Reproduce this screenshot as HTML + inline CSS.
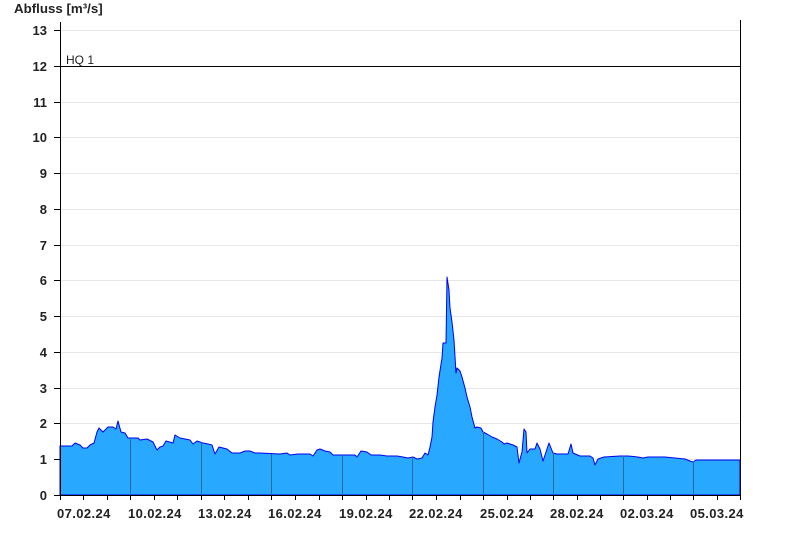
<!DOCTYPE html>
<html><head><meta charset="utf-8"><style>
body{margin:0;background:#fff;width:800px;height:550px;overflow:hidden}
svg{display:block;font-family:"Liberation Sans",Arial,sans-serif}
</style></head><body>
<svg width="800" height="550" viewBox="0 0 800 550">
<text x="14" y="13" font-size="13.3" font-weight="bold" fill="#222">Abfluss [m³/s]</text>
<g stroke="#e6e6e6" stroke-width="1">
<line x1="60" x2="740" y1="30.5" y2="30.5"/>
<line x1="60" x2="740" y1="102.5" y2="102.5"/>
<line x1="60" x2="740" y1="137.5" y2="137.5"/>
<line x1="60" x2="740" y1="173.5" y2="173.5"/>
<line x1="60" x2="740" y1="209.5" y2="209.5"/>
<line x1="60" x2="740" y1="245.5" y2="245.5"/>
<line x1="60" x2="740" y1="280.5" y2="280.5"/>
<line x1="60" x2="740" y1="316.5" y2="316.5"/>
<line x1="60" x2="740" y1="352.5" y2="352.5"/>
<line x1="60" x2="740" y1="388.5" y2="388.5"/>
<line x1="60" x2="740" y1="423.5" y2="423.5"/>
<line x1="60" x2="740" y1="459.5" y2="459.5"/>
</g>
<polygon fill="#29a8ff" stroke="#0000ee" stroke-width="1" stroke-linejoin="round" points="60,495 60,446 72,446 75,443 80,445 83,448 87,448 90,445 94,443 97,432 99,428 103,432 108,427 113,427 116,429 118,421 121,432 125,433 128,438 138,438 140,440 147,439 153,442 157,450 160,447 163,446 166,441 173,443 175,435 180,438 190,440 193,444 197,441 203,443 208,444 212,445 215,454 219,447 227,449 232,453 240,453 245,451 250,451 255,453 260,453 280,454 287,453 290,455 298,454 305,454 310,454 313,456 317,450 320,449 325,451 330,452 333,455 355,455 357,457 361,451 367,452 371,455 380,455 387,456 397,456 403,457 408,458 413,457 417,459 422,458 425,453 428,455 430,447 432,437 433,422 435,407 437,395 439,377 442,358 443,343 446,343 447,277 449,290 450,308 452,322 454,340 456,373 457,368 460,371 462,377 465,388 467,397 470,407 472,417 475,428 477,427 481,428 483,432 487,434 492,437 497,439 502,442 504,444 507,443 513,445 517,447 519,463 522,452 524,429 526,432 527,453 530,449 535,449 537,443 540,449 543,461 546,452 549,443 553,453 557,454 568,454 571,444 573,453 580,456 590,456 593,458 595,465 598,459 604,457 620,456 628,456 638,457 643,458 648,457 665,457 675,458 685,459 690,461 693,462 696,460 720,460 740,460 740,495"/>
<g stroke="#2a6a9a" stroke-width="1">
<line x1="130.5" x2="130.5" y1="438" y2="495"/>
<line x1="201.5" x2="201.5" y1="442" y2="495"/>
<line x1="271.5" x2="271.5" y1="454" y2="495"/>
<line x1="342.5" x2="342.5" y1="455" y2="495"/>
<line x1="412.5" x2="412.5" y1="457" y2="495"/>
<line x1="483.5" x2="483.5" y1="432" y2="495"/>
<line x1="553.5" x2="553.5" y1="453" y2="495"/>
<line x1="623.5" x2="623.5" y1="456" y2="495"/>
<line x1="693.5" x2="693.5" y1="461" y2="495"/>
</g>
<line x1="60" x2="740" y1="66.5" y2="66.5" stroke="#000"/>
<text x="66" y="64" font-size="12" fill="#222">HQ 1</text>
<g stroke="#000" stroke-width="1">
<line x1="60.5" x2="60.5" y1="22" y2="500"/>
<line x1="740.5" x2="740.5" y1="20" y2="500"/>
<line x1="60" x2="741" y1="495.5" y2="495.5"/>
<path d="M54 30.5h6M54 66.5h6M54 102.5h6M54 137.5h6M54 173.5h6M54 209.5h6M54 245.5h6M54 280.5h6M54 316.5h6M54 352.5h6M54 388.5h6M54 423.5h6M54 459.5h6M54 495.5h6"/>
<path d="M83.5 495v5M107.5 495v5M130.5 495v5M154.5 495v5M177.5 495v5M201.5 495v5M224.5 495v5M248.5 495v5M271.5 495v5M295.5 495v5M319.5 495v5M342.5 495v5M366.5 495v5M389.5 495v5M412.5 495v5M436.5 495v5M460.5 495v5M483.5 495v5M507.5 495v5M530.5 495v5M553.5 495v5M577.5 495v5M600.5 495v5M623.5 495v5M647.5 495v5M670.5 495v5M693.5 495v5M717.5 495v5"/>
</g>
<g font-size="13" font-weight="bold" fill="#222" text-anchor="end">
<text x="47" y="35">13</text>
<text x="47" y="71">12</text>
<text x="47" y="107">11</text>
<text x="47" y="142">10</text>
<text x="47" y="178">9</text>
<text x="47" y="214">8</text>
<text x="47" y="250">7</text>
<text x="47" y="285">6</text>
<text x="47" y="321">5</text>
<text x="47" y="357">4</text>
<text x="47" y="393">3</text>
<text x="47" y="428">2</text>
<text x="47" y="464">1</text>
<text x="47" y="500">0</text>
</g>
<g font-size="13" font-weight="bold" fill="#222" letter-spacing="0.4">
<text x="57" y="518">07.02.24</text>
<text x="128" y="518">10.02.24</text>
<text x="198" y="518">13.02.24</text>
<text x="268" y="518">16.02.24</text>
<text x="339" y="518">19.02.24</text>
<text x="409" y="518">22.02.24</text>
<text x="480" y="518">25.02.24</text>
<text x="550" y="518">28.02.24</text>
<text x="620" y="518">02.03.24</text>
<text x="690" y="518">05.03.24</text>
</g>
</svg>
</body></html>
